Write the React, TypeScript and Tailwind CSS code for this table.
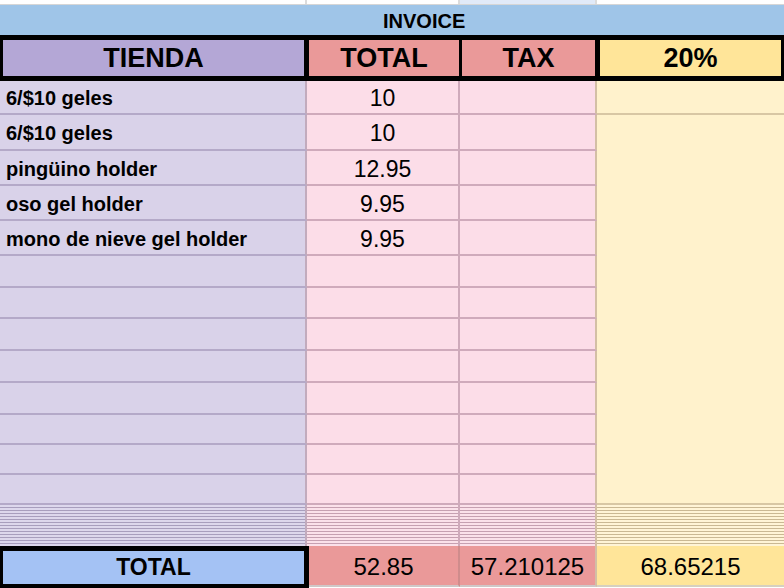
const items = [
  { name: '6/$10 geles', total: '10', h: 'h-[34px]' },
  { name: '6/$10 geles', total: '10', h: 'h-[36px]' },
  { name: 'pingüino holder', total: '12.95', h: 'h-[35px]' },
  { name: 'oso gel holder', total: '9.95', h: 'h-[35px]' },
  { name: 'mono de nieve gel holder', total: '9.95', h: 'h-[35px]' },
];

// empty rows below the entries
const blankHeights = ['h-[32px]', 'h-[31px]', 'h-[32px]', 'h-[32px]', 'h-[32px]', 'h-[30px]', 'h-[30px]', 'h-[30px]'];

const stripes = Array.from({ length: 14 });

export default function App() {
  return (
    <div className="w-[784px] h-[588px] overflow-hidden bg-white font-['Liberation_Sans',Arial,sans-serif] text-black">
      {/* row above, cut off */}
      <div className="flex h-[5px] border-b border-[#d6d6d6]">
        <div className="w-[307px] border-r-2 border-[#dcdcdc]" />
        <div className="w-[153px] border-r-2 border-[#dcdcdc]" />
        <div className="w-[137px] border-r-2 border-[#dcdcdc] bg-[#e1eaf8]" />
        <div className="flex-1" />
      </div>

      {/* invoice band */}
      <div className="h-[30px] bg-[#9fc5e8] pl-[383px] pt-[6px] text-[20px] font-bold leading-none">
        INVOICE
      </div>

      {/* header */}
      <div className="flex h-[46px] bg-black py-[5px] px-[3px] text-[27px] font-bold">
        <div className="w-[301px] bg-[#b4a7d6] flex items-center justify-center">TIENDA</div>
        <div className="ml-[5px] w-[150px] bg-[#ea9999] flex items-center justify-center">TOTAL</div>
        <div className="ml-[3px] w-[133px] bg-[#ea9999] flex items-center justify-center">TAX</div>
        <div className="ml-[5px] flex-1 bg-[#ffe599] flex items-center justify-center">20%</div>
      </div>

      {/* entries */}
      {items.map((it, i) => (
        <div key={i} className={`flex ${it.h}`}>
          <div className="w-[307px] bg-[#d9d2e9] border-r-2 border-r-[#c2abbd] border-b-2 border-b-[#b4a9c8] flex items-center pl-[6px] pt-[2px] text-[20px] font-bold">
            {it.name}
          </div>
          <div className="w-[153px] bg-[#fcdde8] border-r-2 border-r-[#cfaabb] border-b-2 border-b-[#cfaabb] flex items-center justify-center pt-[3px] text-[23px]">
            {it.total}
          </div>
          <div className="w-[137px] bg-[#fcdde8] border-r-2 border-r-[#d3bfa5] border-b-2 border-b-[#cfaabb]" />
          <div className={`flex-1 bg-[#fff2cc] ${i === 0 ? 'border-b-2 border-[#d8c7a4]' : ''}`} />
        </div>
      ))}

      {blankHeights.map((h, i) => (
        <div key={i} className={`flex ${h}`}>
          <div className="w-[307px] bg-[#d9d2e9] border-r-2 border-r-[#c2abbd] border-b-2 border-b-[#b4a9c8]" />
          <div className="w-[153px] bg-[#fcdde8] border-r-2 border-r-[#cfaabb] border-b-2 border-b-[#cfaabb]" />
          <div className="w-[137px] bg-[#fcdde8] border-r-2 border-r-[#d3bfa5] border-b-2 border-b-[#cfaabb]" />
          <div className={`flex-1 bg-[#fff2cc] ${i === blankHeights.length - 1 ? 'border-b-2 border-[#d8c7a4]' : ''}`} />
        </div>
      ))}

      {/* hidden rows, squashed */}
      <div className="flex h-[41px] overflow-hidden">
        <div className="w-[307px] border-r-2 border-[#c2abbd]">
          {stripes.map((_, i) => (
            <div key={i} className="h-[3px] bg-[#ddd7ec] border-b border-[#a89ebd]" />
          ))}
        </div>
        <div className="w-[153px] border-r-2 border-[#cfaabb]">
          {stripes.map((_, i) => (
            <div key={i} className="h-[3px] bg-[#fbe1ea] border-b border-[#c6a0b1]" />
          ))}
        </div>
        <div className="w-[137px] border-r-2 border-[#d3bfa5]">
          {stripes.map((_, i) => (
            <div key={i} className="h-[3px] bg-[#fbe1ea] border-b border-[#c6a0b1]" />
          ))}
        </div>
        <div className="flex-1">
          {stripes.map((_, i) => (
            <div key={i} className="h-[3px] bg-[#fff4d6] border-b border-[#cab893]" />
          ))}
        </div>
      </div>

      {/* totals */}
      <div className="flex h-[42px] text-[24px]">
        <div className="w-[309px] h-full bg-[#a4c2f4] border-black border-t-[5px] border-l-[3px] border-r-[5px] border-b-[4px] flex items-center justify-center text-[23px] font-bold">
          TOTAL
        </div>
        <div className="w-[151px] h-[41px] bg-[#ea9999] border-r-2 border-r-[#cf8c8c] border-b-2 border-b-[#cfc7c7] flex items-center justify-center pt-[2px]">
          52.85
        </div>
        <div className="w-[137px] h-[41px] bg-[#ea9999] border-r-2 border-r-[#d3bfa5] border-b-2 border-b-[#cfc7c7] flex items-center justify-center pt-[2px]">
          57.210125
        </div>
        <div className="flex-1 h-[41px] bg-[#ffe599] border-b-2 border-b-[#d6d0c0] flex items-center justify-center pt-[2px]">
          68.65215
        </div>
      </div>
    </div>
  );
}
